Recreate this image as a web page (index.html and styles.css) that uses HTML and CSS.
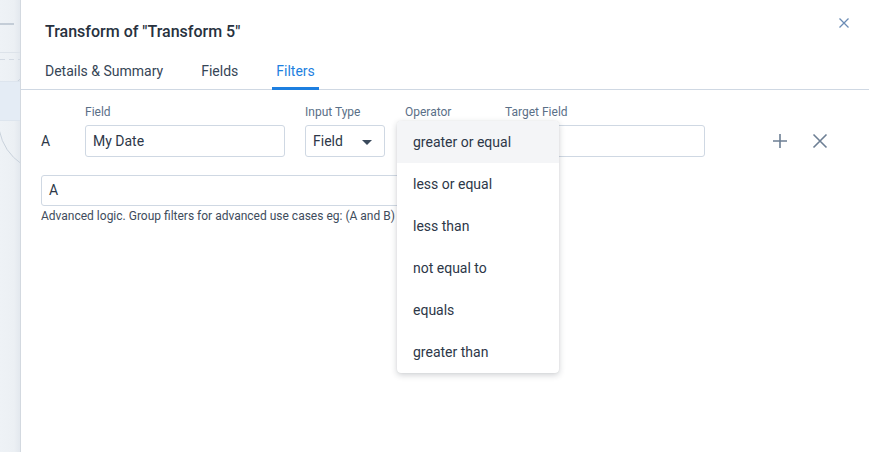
FILE: index.html
```html
<!DOCTYPE html>
<html>
<head>
<meta charset="utf-8">
<link rel="stylesheet" href="styles.css">
</head>
<body>
<div class="page">
  <div class="backdrop">
    <div class="bd-bar"></div>
    <div class="bd-line"></div>
    <div class="bd-dash"></div>
    <div class="bd-band"></div>
    <div class="bd-arc"></div>
  </div>
  <div class="panel">
    <div class="head">
      <h1 class="title">Transform of "Transform 5"</h1>
      <button class="close" aria-label="Close">
        <svg width="10" height="10" viewBox="0 0 10 10"><path d="M0.5 0.5L9.5 9.5M9.5 0.5L0.5 9.5" stroke="#6b8cb5" stroke-width="1.3" fill="none"/></svg>
      </button>
    </div>
    <div class="tabs">
      <div class="tab">Details &amp; Summary</div>
      <div class="tab">Fields</div>
      <div class="tab active">Filters</div>
    </div>
    <div class="content">
      <div class="labels">
        <div class="lbl w200">Field</div>
        <div class="lbl w80">Input Type</div>
        <div class="lbl w80">Operator</div>
        <div class="lbl w200">Target Field</div>
      </div>
      <div class="row">
        <div class="letter">A</div>
        <div class="fields">
          <div class="input w200">My Date</div>
          <div class="input select w80">Field
            <svg class="caret" width="10" height="5" viewBox="0 0 10 5"><path d="M0 0H10L5 5Z" fill="#3a4a5c"/></svg>
          </div>
          <div class="opwrap w80">
            <div class="input select w80"></div>
            <ul class="menu">
              <li class="hl">greater or equal</li>
              <li>less or equal</li>
              <li>less than</li>
              <li>not equal to</li>
              <li>equals</li>
              <li>greater than</li>
            </ul>
          </div>
          <div class="input w200"></div>
        </div>
        <div class="actions">
          <svg width="16" height="16" viewBox="0 0 16 16"><path d="M8 1V15M1 8H15" stroke="#6d7f94" stroke-width="1.6" fill="none"/></svg>
          <svg width="16" height="16" viewBox="0 0 16 16"><path d="M1.5 1.5L14.5 14.5M14.5 1.5L1.5 14.5" stroke="#6d7f94" stroke-width="1.6" fill="none"/></svg>
        </div>
      </div>
      <div class="logic">A</div>
      <div class="help">Advanced logic. Group filters for advanced use cases eg: (A and B) or C</div>
    </div>
  </div>
</div>
</body>
</html>
```

FILE: styles.css
```css
* { box-sizing: border-box; }
html, body { margin: 0; padding: 0; }
body {
  font-family: Roboto, "Liberation Sans", sans-serif;
  color: #2d3748;
  background: #fff;
  width: 869px;
  height: 452px;
  overflow: hidden;
}
.page { display: flex; height: 452px; }

.backdrop {
  width: 21px;
  flex: none;
  background: linear-gradient(to right, #eef2f6 0%, #ecf0f4 70%, #e3e8ee 100%);
  border-right: 1px solid #d3d9e0;
  overflow: hidden;
}
.bd-bar { width: 14px; height: 2px; background: #c4cdd7; margin-top: 23px; }
.bd-line { height: 1px; background: #dde3ea; margin-top: 27px; }
.bd-dash {
  height: 1px; margin-top: 6px;
  background: repeating-linear-gradient(to right, #d3dae3 0 5px, transparent 5px 9px);
}
.bd-band {
  position: relative;
  z-index: 1;
  height: 40px; margin-top: 21px;
  background: #e4ecf5;
  border-top: 1px solid #dde5ee;
  border-bottom: 1px solid #dde5ee;
}
.bd-arc {
  width: 104px; height: 104px;
  margin-top: -52px; margin-left: -2px;
  border: 1px solid #c9d2dc;
  border-radius: 50%;
}

.panel { flex: 1; position: relative; background: #fff; }
.head { display: flex; justify-content: space-between; align-items: flex-start; padding: 0 20px 0 24px; }
.title {
  margin: 22px 0 0;
  font-size: 16px;
  font-weight: 500;
  line-height: 20px;
  color: #27313e;
}
.close {
  border: 0; background: none; padding: 0; margin-top: 18px;
  width: 10px; height: 10px; display: block; line-height: 0;
}
.tabs {
  display: flex;
  gap: 30px;
  padding-left: 20px;
  margin-top: 20px;
  border-bottom: 1px solid #cfd8e3;
}
.tab {
  font-size: 14px;
  line-height: 18px;
  padding: 0 4px 7px;
  color: #364556;
  border-bottom: 3px solid transparent;
  margin-bottom: -1px;
}
.tab.active { color: #1d7fe0; border-bottom-color: #1d7fe0; }

.content { padding: 14px 0 0 20px; }
.labels { display: flex; gap: 20px; padding-left: 44px; }
.lbl { font-size: 12px; line-height: 16px; color: #5a6f87; }
.w200 { width: 200px; flex: none; }
.w80 { width: 80px; flex: none; }

.row { display: flex; align-items: center; margin-top: 5px; }
.letter { width: 44px; font-size: 14px; color: #2d3748; }
.fields { display: flex; gap: 20px; }
.input {
  height: 32px;
  border: 1px solid #cfd8e3;
  border-radius: 3px;
  font-size: 14px;
  line-height: 30px;
  padding: 0 7px;
  color: #2d3748;
}
.select { position: relative; }
.caret { position: absolute; right: 12px; top: 14px; }
.opwrap { position: relative; }
.menu {
  position: absolute;
  left: -8px; top: -4px;
  width: 162px;
  margin: 0; padding: 0;
  list-style: none;
  background: #fff;
  border-radius: 4px;
  box-shadow: 0 2px 6px rgba(30, 40, 55, 0.22), 0 0 1px rgba(30, 40, 55, 0.15);
  z-index: 5;
  overflow: hidden;
}
.menu li {
  height: 42px;
  line-height: 42px;
  padding-left: 16px;
  font-size: 14px;
  color: #2d3748;
}
.menu li.hl { background: #f4f5f7; }
.actions { display: flex; gap: 24px; margin-left: 67px; }
.actions svg { display: block; }

.logic {
  margin-top: 18px;
  width: 440px;
  height: 31px;
  border: 1px solid #cfd8e3;
  border-radius: 3px;
  font-size: 14px;
  line-height: 29px;
  padding: 0 7px;
}
.help { font-size: 12px; line-height: 16px; margin-top: 2px; color: #3e4c5c; }
```
